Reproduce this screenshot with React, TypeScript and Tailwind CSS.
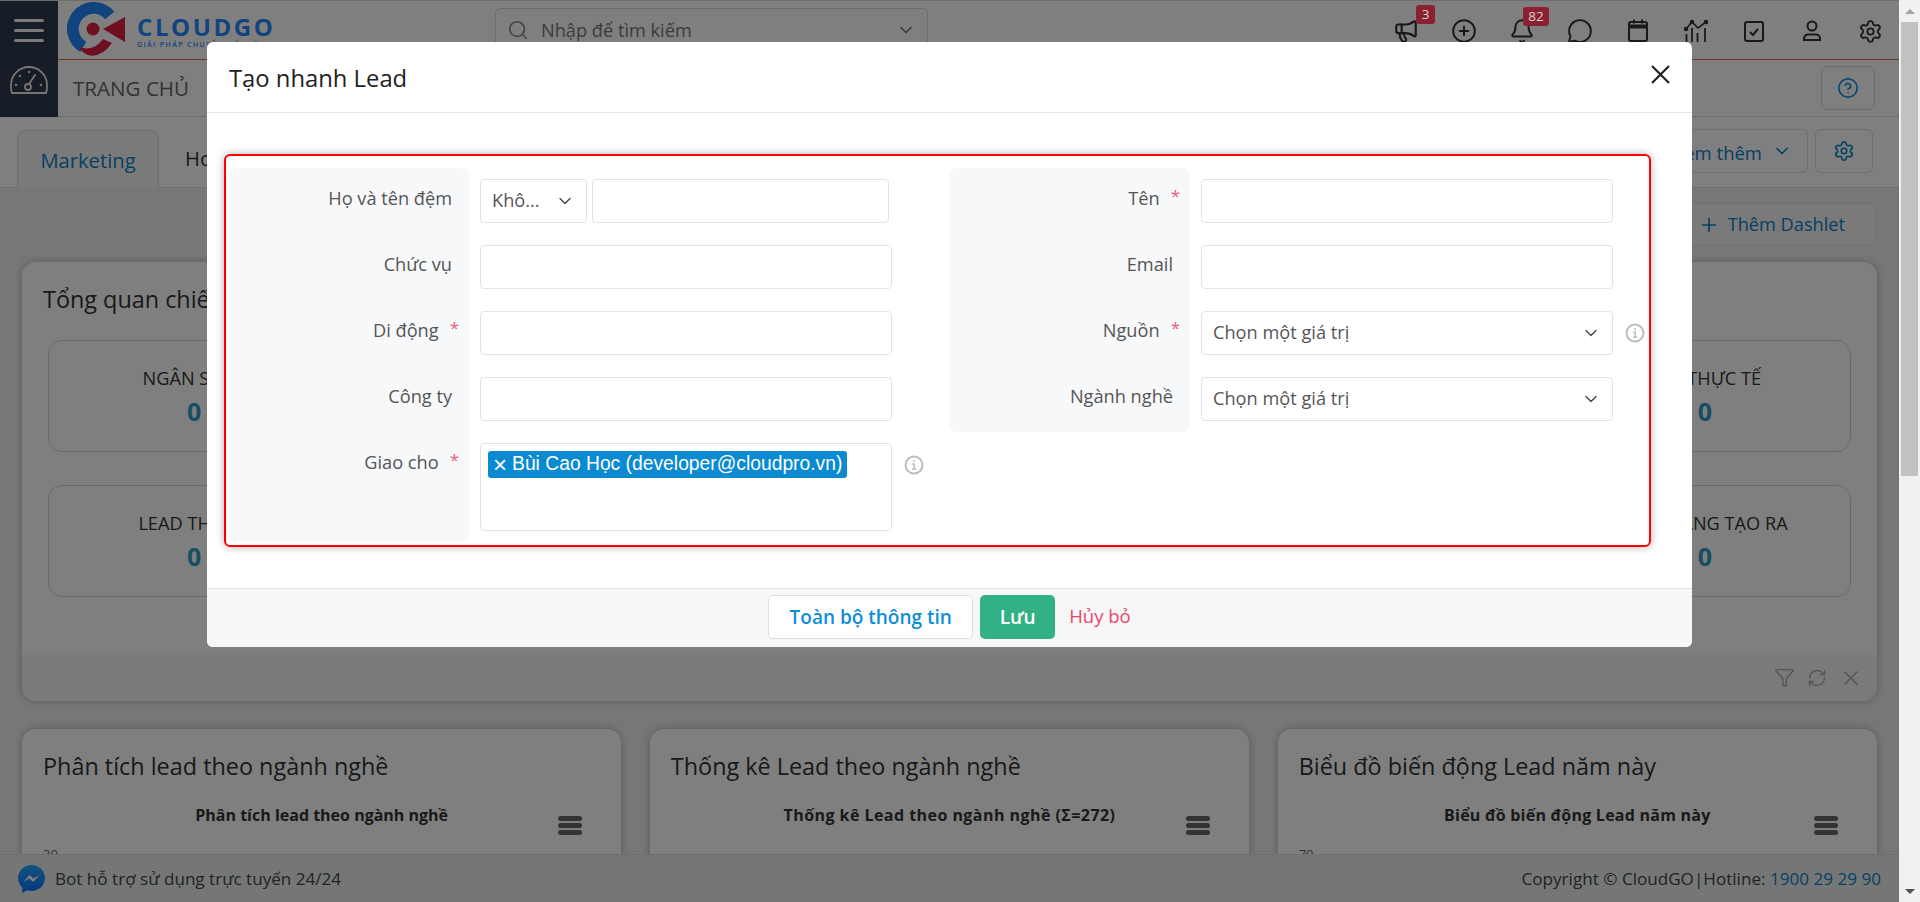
import type { ReactNode } from 'react'
import { Bell, ChevronDown, CirclePlus, Megaphone, MessageCircle, Plus, Search, Settings, CircleHelp, RefreshCw, Funnel, X } from 'lucide-react'

function Logo() {
  return (
    <div className="flex w-[211px] items-center pl-[8px]">
      <svg width="60" height="56" viewBox="0 0 60 56" className="shrink-0">
        <path d="M48.300 9.600A26.800 26.800 0 1 0 14.400 50L20.300 39.800A15 15 0 1 1 39.300 17.200Z" fill="#2388ff" />
        <path d="M13 45Q28 50 37 37L46 41Q36 55 24 53.500Q17 52 13 45Z" fill="#dc2040" />
        <path d="M59 15V40L37 27Z" fill="#dc2040" />
        <circle cx="27" cy="27" r="6.500" fill="#dc2040" />
      </svg>
      <div className="ml-[11px] pt-[3px]">
        <div className="text-[24px] leading-[26px] font-bold tracking-[2.6px] text-[#2388ff]">CLOUDGO</div>
        <div className="text-[7px] leading-[9px] font-semibold tracking-[1.4px] whitespace-nowrap text-[#2388ff]">GIẢI PHÁP CHUYỂN ĐỔI SỐ</div>
      </div>
    </div>
  )
}

function Badge({ children, className }: { children: ReactNode; className: string }) {
  return (
    <span className={`absolute z-20 flex h-[19px] items-center justify-center rounded-[3px] bg-[#8a2030] text-[13.5px] text-[#d8cfcf] ${className}`}>
      {children}
    </span>
  )
}

function TopIcons() {
  const stroke = '#333'
  return (
    <div className="flex items-center pt-[2px]">
      <div className="relative flex w-[58px] justify-center">
        <Megaphone size={26} color={stroke} strokeWidth={2} />
        <Badge className="top-[-13px] left-[39px] w-[19px]">3</Badge>
      </div>
      <div className="flex w-[58px] justify-center">
        <CirclePlus size={26} color={stroke} strokeWidth={1.8} />
      </div>
      <div className="relative flex w-[58px] justify-center">
        <Bell size={26} color={stroke} strokeWidth={1.8} />
        <Badge className="top-[-11px] left-[30px] w-[26px]">82</Badge>
      </div>
      <div className="flex w-[58px] justify-center">
        <MessageCircle size={26} color={stroke} strokeWidth={1.8} />
      </div>
      <div className="flex w-[58px] justify-center">
        <svg width="22" height="24" viewBox="0 0 22 24" fill="none" stroke={stroke} strokeWidth="2">
          <rect x="2" y="3" width="18" height="19" rx="2" />
          <path d="M2 7.500h18" strokeWidth="4" />
          <path d="M7 0.500v4M15 0.500v4" />
        </svg>
      </div>
      <div className="flex w-[58px] justify-center">
        <svg width="24" height="24" viewBox="0 0 24 24" fill="none" stroke={stroke} strokeWidth="1.8">
          <path d="M2 10l6-7 6 6 8-6" strokeWidth="1.600" />
          <path d="M2.500 15v8M8 9v14M13.500 14v9M21 9v14" />
          <circle cx="2" cy="10" r="1.400" fill={stroke} />
          <circle cx="8" cy="3" r="1.400" fill={stroke} />
          <circle cx="22" cy="3" r="1.400" fill={stroke} />
        </svg>
      </div>
      <div className="flex w-[58px] justify-center">
        <svg width="20" height="21" viewBox="0 0 20 21" fill="none" stroke={stroke} strokeWidth="2">
          <rect x="1" y="1" width="18" height="19" rx="2" />
          <path d="M6 11l3 3 5-6" />
        </svg>
      </div>
      <div className="flex w-[58px] justify-center">
        <svg width="20" height="22" viewBox="0 0 20 22" fill="none" stroke={stroke} strokeWidth="2">
          <circle cx="10" cy="6" r="4.500" />
          <path d="M2 20v-1.500a4 4 0 0 1 4-4h8a4 4 0 0 1 4 4V20Z" />
        </svg>
      </div>
      <div className="flex w-[58px] justify-center">
        <Settings size={25} color={stroke} strokeWidth={1.8} />
      </div>
    </div>
  )
}

function Header() {
  return (
    <div className="flex h-[117px] border-t border-[#dcdcdc] bg-white">
      <div className="flex w-[58px] shrink-0 flex-col items-center bg-[#2c3a4c]">
        <div className="mt-[18px] flex w-[30px] flex-col gap-[7px]">
          <div className="h-[3px] rounded bg-[#f4f4f4]" />
          <div className="h-[3px] rounded bg-[#f4f4f4]" />
          <div className="h-[3px] rounded bg-[#f4f4f4]" />
        </div>
        <svg className="mt-[23px]" width="38" height="30" viewBox="0 0 38 30" fill="none" stroke="#f0eae2" strokeWidth="1.8" strokeLinecap="round">
          <path d="M2 28c-1-2-1-5-1-8a18 18 0 0 1 36 0c0 3 0 6-1 8H2Z" />
          <path d="M19 19l6-9" />
          <circle cx="18" cy="22" r="3" />
          <path d="M6 20h.1M10 11h.1M19 7h.1M31 20h.1" strokeWidth="2.400" />
        </svg>
      </div>
      <div className="flex flex-1 flex-col">
        <div className="flex h-[59px] items-center justify-between border-b border-[#e0703a]">
          <div className="flex items-center">
            <Logo />
            <div className="ml-[226px] flex h-[44px] w-[433px] items-center rounded-[5px] border border-[#d8d8d8] pr-[11px] pl-[11px]">
              <Search size={22} color="#8a8a8a" strokeWidth={1.8} />
              <span className="ml-[12px] flex-1 pt-[1px] text-[18.2px] text-[#777]">Nhập để tìm kiếm</span>
              <ChevronDown size={20} color="#777" />
            </div>
          </div>
          <TopIcons />
        </div>
        <div className="flex h-[57px] items-center justify-between border-b border-[#dcdcdc] pr-[24px]">
          <span className="ml-[15px] text-[20.600px] text-[#666]">TRANG CHỦ</span>
          <div className="flex h-[44px] w-[54px] items-center justify-center rounded-[6px] border border-[#d8d8d8]">
            <CircleHelp size={22} color="#0c8ed9" strokeWidth={1.8} />
          </div>
        </div>
      </div>
    </div>
  )
}

function Tabs() {
  return (
    <div className="flex h-[71px] items-end justify-between border-b border-[#dcdcdc] bg-white pr-[26px]">
      <div className="flex items-end">
        <div className="mb-[-1px] ml-[17px] flex h-[58px] w-[142px] items-center justify-center rounded-t-[8px] border border-b-0 border-[#dcdcdc] bg-[#f4f5f7] pt-[2px] text-[20.200px] font-medium text-[#0d7fc2]">
          Marketing
        </div>
        <div className="flex h-[58px] items-center px-[26px] text-[20.200px] font-medium text-[#333]">Hoạt động</div>
      </div>
      <div className="mb-[14px] flex gap-[7px]">
        <div className="flex h-[44px] w-[170px] items-center justify-end gap-[10px] rounded-[6px] border border-[#dcdcdc] pr-[15px] text-[18.500px] text-[#0d7fc2]">
          <span className="pt-[3px]">Xem thêm</span>
          <ChevronDown size={20} />
        </div>
        <div className="flex h-[44px] w-[58px] items-center justify-center rounded-[6px] border border-[#dcdcdc]">
          <Settings size={22} color="#0d7fc2" strokeWidth={1.8} />
        </div>
      </div>
    </div>
  )
}

function StatBox({ title }: { title: string }) {
  return (
    <div className="flex h-[112px] flex-col items-center rounded-[14px] border border-[#d4d4d4] pt-[25px]">
      <span className="text-[18.200px] leading-[24px] font-medium whitespace-nowrap text-[#333]">{title}</span>
      <span className="mt-[4px] text-[25px] leading-[34px] font-bold text-[#2c9dc4]">0</span>
    </div>
  )
}

function ChartCard({ title, chartTitle, tick, titleClass = '' }: { title: string; chartTitle: string; tick: string; titleClass?: string }) {
  return (
    <div className="relative h-[160px] rounded-[14px] bg-white px-[21px] pt-[21px] shadow-[0_0_8px_rgba(0,0,0,0.25)]">
      <div className="text-[23.400px] leading-[32px] text-[#333]">{title}</div>
      <div className={`mt-[23px] text-center text-[16px] leading-[20px] font-bold text-[#333] ${titleClass}`}>{chartTitle}</div>
      <div className="mt-[21px] text-[13px] leading-[16px] text-[#666]">{tick}</div>
      <div className="absolute top-[87px] right-[39px] flex w-[24px] flex-col gap-[2px]">
        <div className="h-[5px] rounded-full bg-[#666]" />
        <div className="h-[5px] rounded-full bg-[#666]" />
        <div className="h-[5px] rounded-full bg-[#666]" />
      </div>
    </div>
  )
}

function Dashboard() {
  return (
    <div className="flex-1 overflow-hidden bg-[#eceef2] px-[22px]">
      <div className="mt-[15px] flex justify-end pr-[1px]">
        <div className="flex h-[43px] w-[200px] items-center justify-end gap-[8px] rounded-[6px] border border-[#e2e2e2] bg-[#f4f5f7] pr-[30px] text-[18.200px] text-[#0d7fc2]">
          <Plus size={22} strokeWidth={1.8} />
          Thêm Dashlet
        </div>
      </div>
      <div className="mt-[16px] h-[439px] overflow-hidden rounded-[14px] bg-white shadow-[0_0_8px_rgba(0,0,0,0.25)]">
        <div className="px-[21px] pt-[21px] text-[23.400px] leading-[32px] text-[#333]">Tổng quan chiến dịch</div>
        <div className="mt-[25px] grid grid-cols-6 gap-x-[10px] gap-y-[33px] px-[26px]">
          <StatBox title="NGÂN SÁCH" />
          <StatBox title="DOANH THU" />
          <StatBox title="CHI PHÍ" />
          <StatBox title="LỢI NHUẬN" />
          <StatBox title="ROI" />
          <StatBox title="CPA THỰC TẾ" />
          <StatBox title="LEAD THU VỀ" />
          <StatBox title="CƠ HỘI" />
          <StatBox title="BÁO GIÁ" />
          <StatBox title="HỢP ĐỒNG" />
          <StatBox title="DOANH SỐ" />
          <StatBox title="ĐƠN HÀNG TẠO RA" />
        </div>
        <div className="mt-[58px] flex h-[45px] items-center justify-end gap-[12px] bg-[#f5f5f5] pr-[14px]">
          <Funnel size={21} color="#aaa" strokeWidth={1.6} />
          <RefreshCw size={20} color="#aaa" strokeWidth={1.6} />
          <X size={24} color="#aaa" strokeWidth={1.6} />
        </div>
      </div>
      <div className="mt-[28px] grid grid-cols-3 gap-[28.500px]">
        <ChartCard title="Phân tích lead theo ngành nghề" chartTitle="Phân tích lead theo ngành nghề" tick="30" />
        <ChartCard title="Thống kê Lead theo ngành nghề" chartTitle="Thống kê Lead theo ngành nghề (Σ=272)" tick="" titleClass="tracking-[0.45px]" />
        <ChartCard title="Biểu đồ biến động Lead năm này" chartTitle="Biểu đồ biến động Lead năm này" tick="70" titleClass="tracking-[0.25px]" />
      </div>
    </div>
  )
}

function PageFooter() {
  return (
    <div className="flex h-[48px] shrink-0 items-center justify-between border-t border-[#d9dcdc] bg-[#ebefef] pr-[18px] pl-[18px] text-[17.100px] text-[#444]">
      <div className="flex items-center gap-[10px]">
        <svg width="27" height="28" viewBox="0 0 27 28">
          <defs>
            <linearGradient id="msg" x1="0" y1="0" x2="0" y2="1">
              <stop offset="0" stopColor="#2aa9ff" />
              <stop offset="1" stopColor="#0a6cff" />
            </linearGradient>
          </defs>
          <path d="M13.500 0C6 0 0 5.700 0 13c0 3.800 1.600 7 4.300 9.400V28l5-2.700c1.300.4 2.700.6 4.200.6 7.500 0 13.500-5.700 13.500-12.900S21 0 13.500 0Z" fill="url(#msg)" />
          <path d="M5.500 17l6-7 4 3.500 5.800-3.500-6 7-4-3.500Z" fill="#fff" />
        </svg>
        <span>Bot hỗ trợ sử dụng trực tuyến 24/24</span>
      </div>
      <div>
        Copyright © CloudGO|Hotline: <span className="text-[#0d7fc2]">1900 29 29 90</span>
      </div>
    </div>
  )
}

function InfoMark() {
  return (
    <svg width="20" height="20" viewBox="0 0 20 20" fill="none" stroke="#bdbdbd" strokeWidth="2">
      <circle cx="10" cy="10" r="8.500" />
      <path d="M8 9h2.200v5M8 14.300h4.400" strokeWidth="1.500" />
      <circle cx="10" cy="6" r="1" fill="#bdbdbd" stroke="none" />
    </svg>
  )
}

function Field({
  label,
  required,
  children,
  last,
  first,
  width = 'w-[240px]',
}: {
  label: string
  required?: boolean
  children: ReactNode
  first?: boolean
  last?: boolean
  width?: string
}) {
  return (
    <div className="flex">
      <div
        className={`flex shrink-0 justify-end bg-[#f7f8fa] pt-[18px] text-[18.200px] leading-[24px] text-[#555] ${width} ${first ? 'rounded-t-[8px]' : ''} ${last ? 'rounded-b-[8px]' : ''} ${required ? 'pr-[10px]' : 'pr-[17px]'}`}
      >
        {label}
        {required && <span className="ml-[11px] text-[17px] leading-[20px] text-[#e8607e]">*</span>}
      </div>
      <div className="flex flex-1 items-start py-[11px] pl-[11px]">{children}</div>
    </div>
  )
}

const inputClass = 'h-[44px] rounded-[4px] border border-[#e3e3e3] bg-white outline-none'

function SelectBox({ value, className }: { value: string; className: string }) {
  return (
    <div className={`flex items-center justify-between pr-[11px] pl-[11px] text-[18.200px] text-[#555] ${inputClass} ${className}`}>
      <span>{value}</span>
      <ChevronDown size={20} color="#444" strokeWidth={1.6} />
    </div>
  )
}

function QuickCreateModal() {
  return (
    <div className="absolute inset-0 z-10 flex justify-center bg-black/50 pt-[42px]">
      <div className="flex h-[605px] w-[1485px] flex-col overflow-hidden rounded-[6px] bg-white">
        <div className="flex h-[71px] shrink-0 items-center justify-between border-b border-[#e4e4e4] px-[22px] pt-[1px]">
          <h3 className="pt-[2px] text-[23.800px] text-[#222]">Tạo nhanh Lead</h3>
          <svg className="mb-[6px]" width="19" height="19" viewBox="0 0 19 19" stroke="#222" strokeWidth="2.2">
            <path d="M1 1l17 17M18 1L1 18" />
          </svg>
        </div>
        <div className="flex-1">
          <div className="mt-[41px] mr-[41px] ml-[17px] flex h-[393px] gap-[59px] rounded-[6px] border-2 border-[#f00] pt-[12px] pl-[3px] shadow-[0_0_8px_rgba(0,0,0,0.3)]">
            <div className="w-[661px] shrink-0">
              <Field label="Họ và tên đệm" first>
                <SelectBox value="Khô..." className="w-[107px]" />
                <input className={`ml-[5px] w-[297px] ${inputClass}`} />
              </Field>
              <Field label="Chức vụ">
                <input className={`w-[412px] ${inputClass}`} />
              </Field>
              <Field label="Di động" required>
                <input className={`w-[412px] ${inputClass}`} />
              </Field>
              <Field label="Công ty">
                <input className={`w-[412px] ${inputClass}`} />
              </Field>
              <Field label="Giao cho" required last>
                <div className="h-[88px] w-[412px] rounded-[4px] border border-[#e3e3e3] p-[7px]">
                  <div className="flex h-[27px] w-fit items-center rounded-[3px] bg-[#0a8ad0] px-[5px] font-['Liberation_Sans',sans-serif] text-[19.300px] whitespace-nowrap text-white">
                    <span className="mr-[5px] text-[24px] leading-none">×</span>Bùi Cao Học (developer@cloudpro.vn)
                  </div>
                </div>
                <div className="mt-[12px] ml-[12px]">
                  <InfoMark />
                </div>
              </Field>
            </div>
            <div className="w-[690px] shrink-0">
              <Field label="Tên" required first width="w-[241px]">
                <input className={`w-[412px] ${inputClass}`} />
              </Field>
              <Field label="Email" width="w-[241px]">
                <input className={`w-[412px] ${inputClass}`} />
              </Field>
              <Field label="Nguồn" required width="w-[241px]">
                <SelectBox value="Chọn một giá trị" className="w-[412px]" />
                <div className="mt-[12px] ml-[12px]">
                  <InfoMark />
                </div>
              </Field>
              <Field label="Ngành nghề" last width="w-[241px]">
                <SelectBox value="Chọn một giá trị" className="w-[412px]" />
              </Field>
            </div>
          </div>
        </div>
        <div className="flex h-[59px] shrink-0 items-center justify-center border-t border-[#e4e4e4] bg-[#f7f7f7] pb-[2px]">
          <button className="h-[44px] w-[205px] rounded-[5px] border border-[#dedede] bg-white text-[19px] font-semibold text-[#0c8ed9]">
            Toàn bộ thông tin
          </button>
          <button className="ml-[7px] h-[44px] w-[75px] rounded-[5px] bg-[#31b184] text-[19px] font-semibold text-white">Lưu</button>
          <span className="ml-[14px] pb-[2px] text-[18.500px] text-[#e6476a]">Hủy bỏ</span>
        </div>
      </div>
    </div>
  )
}

function Scrollbar() {
  return (
    <div className="flex w-[21px] shrink-0 flex-col bg-[#f1f1f1]">
      <div className="flex h-[22px] items-center justify-center">
        <div className="h-0 w-0 border-x-[5px] border-b-[5px] border-x-transparent border-b-[#a3a3a3]" />
      </div>
      <div className="mx-[2px] h-[454px] bg-[#c1c1c1]" />
      <div className="flex-1" />
      <div className="flex h-[22px] items-center justify-center">
        <div className="h-0 w-0 border-x-[5px] border-t-[5px] border-x-transparent border-t-[#505050]" />
      </div>
    </div>
  )
}

export default function App() {
  return (
    <div className="flex h-[902px] w-full overflow-hidden font-['Open_Sans',sans-serif]">
      <div className="relative flex min-w-0 flex-1 flex-col">
        <Header />
        <Tabs />
        <Dashboard />
        <PageFooter />
        <QuickCreateModal />
      </div>
      <Scrollbar />
    </div>
  )
}
